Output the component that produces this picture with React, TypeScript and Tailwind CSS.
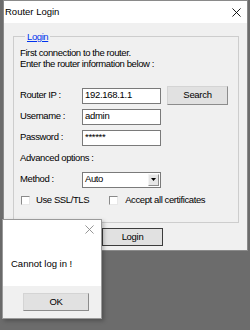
import React from 'react';

const ui = { fontFamily: '"Liberation Sans", Arial, sans-serif' };

const CloseIcon: React.FC<{ size?: number; color?: string }> = ({ size = 9, color = '#000' }) => (
    <svg width={size} height={size} viewBox="0 0 10 10" className="block">
        <path d="M0.5 0.5 L9.5 9.5 M9.5 0.5 L0.5 9.5" stroke={color} strokeWidth="1" fill="none" />
    </svg>
);

// Win10-ish push button
const Button: React.FC<{ label: string; className?: string; isDefault?: boolean }> = ({ label, className = '', isDefault }) => (
    <div
        className={`flex items-center justify-center bg-[#e1e1e1] border ${
            isDefault
                ? 'border-[#3c3c3c]'
                : 'border-t-[#d4d4d4] border-l-[#d4d4d4] border-r-[#8c8c8c] border-b-[#8c8c8c]'
        } text-[9.5px] tracking-[-0.3px] text-black ${className}`}
    >
        {label}
    </div>
);

const TextField: React.FC<{ value: string }> = ({ value }) => (
    <div className="w-[79px] h-[16px] bg-white border border-[#7a7a7a] flex items-center pl-[2px] text-[9.5px] tracking-[-0.3px] text-black">
        {value}
    </div>
);

const Checkbox: React.FC = () => (
    <div className="w-[9px] h-[9px] bg-white border border-t-[#8a8a8a] border-l-[#8a8a8a] border-r-[#e8e8e8] border-b-[#e8e8e8]" />
);

const Row: React.FC<{ label: string; children: React.ReactNode }> = ({ label, children }) => (
    <div className="flex items-center h-[21px]">
        <div className="w-[62px]">{label}</div>
        {children}
    </div>
);

export default function App() {
    return (
        <div className="relative w-[250px] h-[330px] bg-[#6c6c6c] overflow-hidden" style={ui}>
            {/* main window */}
            <div className="ml-[3px] w-[245px] h-[251px] border border-[#8a8a8a] flex flex-col bg-[#f0f0f0]">
                <div className="h-[22px] bg-white flex items-center justify-between pl-[1px] pr-[6px] text-[9.5px] text-black">
                    <span>Router Login</span>
                    <CloseIcon />
                </div>

                <fieldset className="ml-[9px] mt-[8px] w-[226px] h-[192px] border border-[#cdcdcd] px-[6px] pt-[5px] text-[9.5px] tracking-[-0.4px] text-black">
                    <legend className="ml-[5px] px-[2px] leading-[11px] text-[#0033ee] underline">Login</legend>
                    <div className="leading-[11px]">
                        <div>First connection to the router.</div>
                        <div>Enter the router information below :</div>
                    </div>

                    <div className="mt-[16px]">
                        <Row label="Router IP :">
                            <TextField value="192.168.1.1" />
                            <Button label="Search" className="ml-[6px] w-[61px] h-[19px]" />
                        </Row>
                        <Row label="Username :">
                            <TextField value="admin" />
                        </Row>
                        <Row label="Password :">
                            <TextField value="******" />
                        </Row>
                        <div className="flex items-center h-[21px]">Advanced options :</div>
                        <Row label="Method :">
                            <div className="w-[79px] h-[16px] bg-white border border-[#7a7a7a] flex items-center justify-between pl-[2px] pr-[1px]">
                                <span>Auto</span>
                                <div className="w-[11px] h-[12px] bg-[#e6e6e6] border border-t-[#f4f4f4] border-l-[#f4f4f4] border-r-[#8c8c8c] border-b-[#8c8c8c] flex items-center justify-center">
                                    <svg width="5" height="3" viewBox="0 0 5 3" className="block">
                                        <path d="M0 0 H5 L2.5 3 Z" fill="#000" />
                                    </svg>
                                </div>
                            </div>
                        </Row>
                        <div className="flex items-center h-[20px]">
                            <div className="ml-[1px]">
                                <Checkbox />
                            </div>
                            <span className="ml-[6px]">Use SSL/TLS</span>
                            <div className="ml-[20px]">
                                <Checkbox />
                            </div>
                            <span className="ml-[7px]">Accept all certificates</span>
                        </div>
                    </div>
                </fieldset>

                <Button label="Login" isDefault className="mt-[5px] ml-[98px] w-[61px] h-[18px]" />
            </div>

            {/* message box */}
            <div className="absolute left-[2px] top-[219px] w-[100px] h-[100px] border border-[#9a9a9a] bg-white flex flex-col shadow-[2px_2px_4px_rgba(0,0,0,0.25)]">
                <div className="h-[66px] flex flex-col">
                    <div className="flex justify-end pt-[5px] pr-[7px]">
                        <CloseIcon color="#8a8a8a" />
                    </div>
                    <div className="mt-[24px] pl-[8px] text-[9.5px] leading-[12px] text-black">Cannot log in !</div>
                </div>
                <div className="flex-1 bg-[#f0f0f0] pt-[7px] pl-[20px]">
                    <Button label="OK" className="w-[66px] h-[18px]" />
                </div>
            </div>
        </div>
    );
}
